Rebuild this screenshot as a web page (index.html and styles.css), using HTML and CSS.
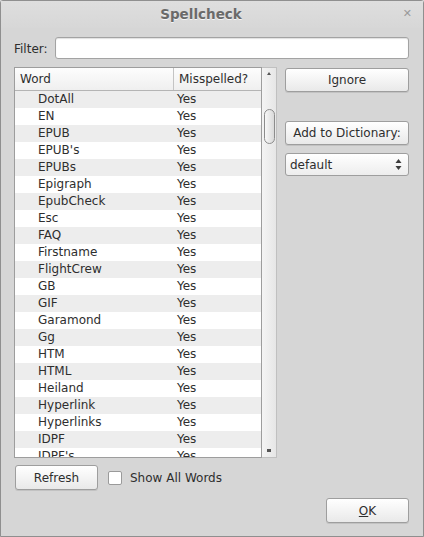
FILE: index.html
```html
<!DOCTYPE html>
<html>
<head>
<meta charset="utf-8">
<link rel="stylesheet" href="styles.css">
</head>
<body>
<div class="window">
  <div class="titlebar">
    <span class="title">Spellcheck</span>
    <span class="close">✕</span>
  </div>
  <div class="content">
    <div class="filter-row">
      <label class="filter-label">Filter:</label>
      <div class="input"></div>
    </div>
    <div class="main-row">
      <div class="listwrap">
        <div class="list">
          <div class="header">
            <div class="hcell hword">Word</div>
            <div class="hcell hmis">Misspelled?</div>
          </div>
          <div class="rows">
            <div class="row alt"><span class="w">DotAll</span><span class="y">Yes</span></div>
            <div class="row"><span class="w">EN</span><span class="y">Yes</span></div>
            <div class="row alt"><span class="w">EPUB</span><span class="y">Yes</span></div>
            <div class="row"><span class="w">EPUB's</span><span class="y">Yes</span></div>
            <div class="row alt"><span class="w">EPUBs</span><span class="y">Yes</span></div>
            <div class="row"><span class="w">Epigraph</span><span class="y">Yes</span></div>
            <div class="row alt"><span class="w">EpubCheck</span><span class="y">Yes</span></div>
            <div class="row"><span class="w">Esc</span><span class="y">Yes</span></div>
            <div class="row alt"><span class="w">FAQ</span><span class="y">Yes</span></div>
            <div class="row"><span class="w">Firstname</span><span class="y">Yes</span></div>
            <div class="row alt"><span class="w">FlightCrew</span><span class="y">Yes</span></div>
            <div class="row"><span class="w">GB</span><span class="y">Yes</span></div>
            <div class="row alt"><span class="w">GIF</span><span class="y">Yes</span></div>
            <div class="row"><span class="w">Garamond</span><span class="y">Yes</span></div>
            <div class="row alt"><span class="w">Gg</span><span class="y">Yes</span></div>
            <div class="row"><span class="w">HTM</span><span class="y">Yes</span></div>
            <div class="row alt"><span class="w">HTML</span><span class="y">Yes</span></div>
            <div class="row"><span class="w">Heiland</span><span class="y">Yes</span></div>
            <div class="row alt"><span class="w">Hyperlink</span><span class="y">Yes</span></div>
            <div class="row"><span class="w">Hyperlinks</span><span class="y">Yes</span></div>
            <div class="row alt"><span class="w">IDPF</span><span class="y">Yes</span></div>
            <div class="row"><span class="w">IDPF's</span><span class="y">Yes</span></div>
          </div>
        </div>
        <div class="scrollbar">
          <div class="arrow-up"></div>
          <div class="thumb"></div>
          <div class="arrow-down"></div>
        </div>
      </div>
      <div class="side">
        <div class="btn ignore">Ignore</div>
        <div class="btn add">Add to Dictionary:</div>
        <div class="combo">
          <span>default</span>
          <span class="spin">
            <svg width="7" height="13" viewBox="0 0 7 13"><path d="M3.5 1 L6.5 5 L0.5 5 Z M0.5 8 L6.5 8 L3.5 12 Z" fill="#3c3c3c"/></svg>
          </span>
        </div>
      </div>
    </div>
    <div class="bottom-row">
      <div class="btn refresh">Refresh</div>
      <div class="check"></div>
      <span class="check-label">Show All Words</span>
    </div>
    <div class="ok-row">
      <div class="btn ok"><u>O</u>K</div>
    </div>
  </div>
</div>
</body>
</html>
```

FILE: styles.css
```css
html, body {
  margin: 0;
  padding: 0;
}
body {
  width: 424px;
  height: 537px;
  font-family: "DejaVu Sans", sans-serif;
  font-size: 12px;
  color: #2e2e2e;
  background: #d6d6d6;
}
.window {
  box-sizing: border-box;
  width: 424px;
  height: 537px;
  border: 1px solid #8f8f8f;
  border-radius: 3px 3px 0 0;
  background: #d6d6d6;
  display: flex;
  flex-direction: column;
}
.titlebar {
  height: 27px;
  position: relative;
  display: flex;
  align-items: center;
  justify-content: center;
  padding-right: 22px;
  background: linear-gradient(#dedede, #d7d7d7);
}
.title {
  font-weight: bold;
  font-size: 13.5px;
  color: #6a6a6a;
  text-shadow: 0 1px 0 #f4f4f4;
  margin-top: -1px;
}
.close {
  position: absolute;
  right: 11px;
  top: 6px;
  font-size: 11px;
  color: #9a9a9a;
  font-weight: bold;
}
.content {
  padding: 8px 14px 0 13px;
  display: flex;
  flex-direction: column;
}
.filter-row {
  display: flex;
  align-items: center;
  height: 24px;
}
.filter-label {
  width: 41px;
  padding-top: 1px;
}
.input {
  flex: 1;
  height: 22px;
  box-sizing: border-box;
  border: 1px solid #a3a3a3;
  border-radius: 3px;
  background: #fff;
  box-shadow: inset 0 1px 1px #e0e0e0;
}
.main-row {
  display: flex;
  margin-top: 7px;
}
.listwrap {
  display: flex;
  width: 263px;
  height: 391px;
}
.list {
  width: 248px;
  box-sizing: border-box;
  border: 1px solid #9d9d9d;
  background: #fff;
  overflow: hidden;
}
.header {
  display: flex;
  height: 22px;
  border-bottom: 1px solid #b4b4b4;
  background: linear-gradient(#fdfdfd, #efefef);
}
.hcell {
  line-height: 22px;
  box-sizing: border-box;
}
.hword {
  width: 159px;
  padding-left: 5px;
  border-right: 1px solid #c4c4c4;
}
.hmis {
  padding-left: 5px;
}
.row {
  display: flex;
  height: 17px;
  line-height: 17px;
}
.row.alt {
  background: #ededed;
}
.w {
  width: 162px;
  padding-left: 23px;
  box-sizing: border-box;
}
.scrollbar {
  width: 15px;
  box-sizing: border-box;
  border: 1px solid #c0c0c0;
  border-left: none;
  background: linear-gradient(90deg, #f4f4f4, #e6e6e6);
  display: flex;
  flex-direction: column;
  align-items: center;
}
.arrow-up {
  margin-top: 4px;
  width: 0;
  height: 0;
  border-left: 2px solid transparent;
  border-right: 2px solid transparent;
  border-bottom: 3px solid #555;
}
.thumb {
  margin-top: 34px;
  width: 11px;
  height: 35px;
  box-sizing: border-box;
  border: 1px solid #8c8c8c;
  border-radius: 6px;
  background: linear-gradient(90deg, #f8f8f8, #d9d9d9);
}
.arrow-down {
  margin-top: auto;
  margin-bottom: 5px;
  width: 4px;
  height: 3px;
  background: #555;
}
.side {
  margin-left: 8px;
  flex: 1;
  display: flex;
  flex-direction: column;
}
.btn {
  box-sizing: border-box;
  height: 24px;
  border: 1px solid #9e9e9e;
  border-radius: 3px;
  background: linear-gradient(#ffffff, #e9e9e9);
  box-shadow: 0 1px 0 #c2c2c2;
  display: flex;
  align-items: center;
  justify-content: center;
}
.ignore {
  margin-top: 1px;
}
.add {
  margin-top: 29px;
}
.combo {
  margin-top: 8px;
  box-sizing: border-box;
  height: 23px;
  border: 1px solid #9e9e9e;
  border-radius: 3px;
  background: linear-gradient(#ffffff, #ededed);
  display: flex;
  align-items: center;
  justify-content: space-between;
  padding: 0 6px 0 4px;
}
.spin {
  display: flex;
  align-items: center;
}
.bottom-row {
  display: flex;
  align-items: center;
  margin-top: 7px;
  padding-left: 1px;
}
.refresh {
  width: 83px;
  height: 25px;
}
.check {
  margin-left: 10px;
  width: 14px;
  height: 14px;
  box-sizing: border-box;
  border: 1px solid #9a9a9a;
  border-radius: 2px;
  background: #fff;
}
.check-label {
  margin-left: 8px;
}
.ok-row {
  display: flex;
  justify-content: flex-end;
  margin-top: 8px;
}
.ok {
  width: 83px;
  height: 25px;
}
```
